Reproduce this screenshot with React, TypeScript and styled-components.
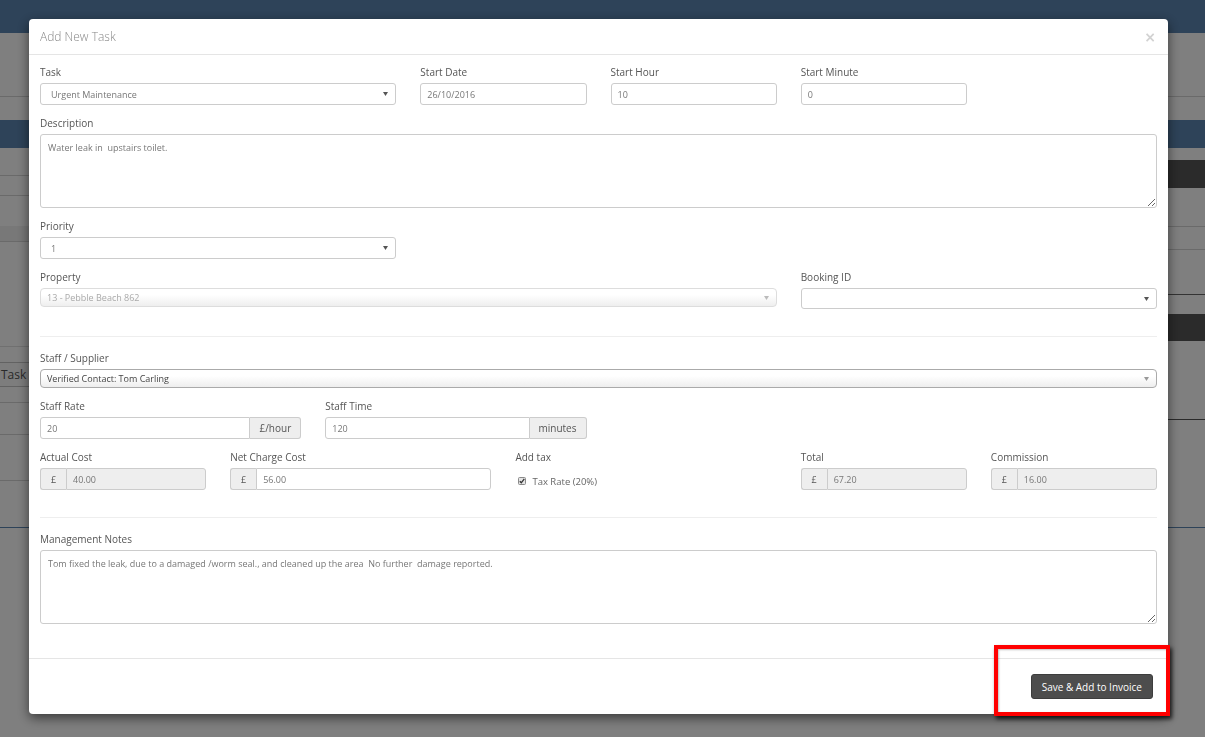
import React from 'react';
import styled, { createGlobalStyle } from 'styled-components';

const Global = createGlobalStyle`
  html, body { margin: 0; padding: 0; }
  body {
    width: 1205px;
    height: 737px;
    overflow: hidden;
    background: #fff;
    font-family: "Open Sans", "Liberation Sans", sans-serif;
  }
  * { box-sizing: border-box; }
`;

/* ---------- background page (under the backdrop) ---------- */
const Page = styled.div`
  width: 1205px;
  height: 737px;
  display: flex;
  flex-direction: column;
`;
const TopNav = styled.div`
  height: 33px;
  background: #5c86b2;
  flex-shrink: 0;
`;
const SubHeader = styled.div`
  height: 64px;
  border-bottom: 1px solid #d4d4d4;
`;
const BlueBar = styled.div`
  margin-top: 23px;
  height: 28px;
  background: #5c86b2;
`;
const Columns = styled.div`
  display: flex;
`;
const LeftCol = styled.div`
  width: 600px;
  display: flex;
  flex-direction: column;
`;
const RightCol = styled.div`
  flex: 1;
  display: flex;
  flex-direction: column;
`;
const Stripe = styled.div<{ $h: number; $bg?: string; $line?: string }>`
  height: ${(p) => p.$h}px;
  background: ${(p) => p.$bg || 'transparent'};
  border-bottom: ${(p) => (p.$line ? `1px solid ${p.$line}` : 'none')};
`;
const ButtonRow = styled.div`
  height: 56px;
  display: flex;
  align-items: center;
  border-bottom: 1px solid #d4d4d4;
`;
const GhostButton = styled.div`
  margin-left: -3px;
  height: 25px;
  padding: 0 8px 0 3px;
  border: 1px solid #c4c4c4;
  border-radius: 3px;
  font-size: 12px;
  color: #555;
  display: flex;
  align-items: center;
  background: #fafafa;
`;
const BlueLine = styled.div`
  height: 1px;
  background: #5c86b2;
`;

/* ---------- modal ---------- */
const Backdrop = styled.div`
  position: fixed;
  inset: 0;
  background: rgba(0, 0, 0, 0.5);
`;
const ModalLayer = styled.div`
  position: fixed;
  inset: 0;
  padding: 19px 0 0 29px;
`;
const Modal = styled.div`
  position: relative;
  width: 1139px;
  background: #fff;
  border-radius: 4px;
  box-shadow: 0 4px 12px rgba(0, 0, 0, 0.55);
`;
const Header = styled.div`
  height: 36px;
  padding: 0 11px;
  border-bottom: 1px solid #e5e5e5;
  display: flex;
  align-items: center;
  justify-content: space-between;
`;
const Title = styled.h4`
  margin: 0;
  font-size: 12px;
  font-weight: 300;
  color: #888;
`;
const Close = styled.span`
  font-size: 14px;
  line-height: 1;
  color: #d2d2d2;
  font-family: "DejaVu Sans", sans-serif;
  font-weight: bold;
  margin-right: 1px;
`;
const Body = styled.div`
  padding: 10px 11px 23px;
`;
const Row = styled.div`
  display: grid;
  grid-template-columns: repeat(12, 1fr);
  column-gap: 24px;
  margin-bottom: 11px;
  align-items: start;
`;
const Field = styled.div<{ $span: number }>`
  grid-column: span ${(p) => p.$span};
  min-width: 0;
`;
const Label = styled.label`
  display: block;
  font-size: 10px;
  line-height: 14px;
  margin-bottom: 4px;
  color: #555;
`;
const TextInput = styled.input<{ $ro?: boolean; $group?: 'left' | 'right' }>`
  display: block;
  width: 100%;
  min-width: 0;
  height: 22px;
  padding: 0 6px;
  border: 1px solid #ccc;
  border-radius: ${(p) =>
    p.$group === 'left' ? '3px 0 0 3px' : p.$group === 'right' ? '0 3px 3px 0' : '3px'};
  background: ${(p) => (p.$ro ? '#eee' : '#fff')};
  font-family: inherit;
  font-size: 9px;
  color: #777;
  outline: none;
  flex: 1;
`;
const TextArea = styled.textarea`
  display: block;
  width: 100%;
  height: 74px;
  padding: 6px 7px;
  border: 1px solid #ccc;
  border-radius: 3px;
  font-family: inherit;
  font-size: 9px;
  line-height: 14px;
  color: #777;
  resize: vertical;
  outline: none;
`;
const SelectBox = styled.div<{ $h?: number }>`
  height: ${(p) => p.$h || 22}px;
  border: 1px solid #ccc;
  border-radius: 3px;
  padding: 0 7px 0 10px;
  display: flex;
  align-items: center;
  justify-content: space-between;
  font-size: 9px;
  color: #777;
  background: #fff;
`;
const FancySelect = styled.div<{ $disabled?: boolean }>`
  height: 19px;
  border: 1px solid ${(p) => (p.$disabled ? '#ddd' : '#aaa')};
  border-radius: 4px;
  padding: 0 7px 0 6px;
  display: flex;
  align-items: center;
  justify-content: space-between;
  font-size: 9px;
  color: ${(p) => (p.$disabled ? '#aaa' : '#444')};
  background: linear-gradient(to bottom, #fff 0%, #fff 35%, #eee 100%);
`;
const InputGroup = styled.div`
  display: flex;
  height: 22px;
`;
const Addon = styled.span<{ $side: 'left' | 'right' }>`
  display: flex;
  align-items: center;
  justify-content: center;
  padding: 0 ${(p) => (p.$side === 'left' ? 8 : 9)}px;
  min-width: 26px;
  background: #eee;
  border: 1px solid #ccc;
  border-radius: ${(p) => (p.$side === 'left' ? '3px 0 0 3px' : '0 3px 3px 0')};
  ${(p) => (p.$side === 'left' ? 'border-right: 0;' : 'border-left: 0;')}
  font-size: ${(p) => (p.$side === 'left' ? 9 : 10)}px;
  color: #555;
  flex-shrink: 0;
`;
const CheckRow = styled.div`
  height: 22px;
  padding: 4px 0 0 3px;
  display: flex;
  align-items: center;
  gap: 6px;
  font-size: 9.5px;
  color: #666;
`;
const Divider = styled.hr`
  margin: 27px 0 14px;
  border: 0;
  border-top: 1px solid #eee;
`;
const Footer = styled.div`
  border-top: 1px solid #e5e5e5;
  padding: 15px;
  display: flex;
  justify-content: flex-end;
`;
const PrimaryButton = styled.button`
  height: 25px;
  padding: 0 10px;
  border: 1px solid #3d3d3d;
  border-radius: 3px;
  background: #4d4d4d;
  color: #fff;
  font-family: inherit;
  font-size: 10px;
`;
const Highlight = styled.div`
  position: absolute;
  left: 965px;
  top: 626px;
  width: 176px;
  height: 71px;
  border: 4px solid #ff0000;
  box-shadow: 2px 3px 4px rgba(0, 0, 0, 0.75), inset 1px 1px 2px rgba(0, 0, 0, 0.25);
  pointer-events: none;
`;

const Caret = ({ color = '#555' }: { color?: string }) => (
  <svg width="5" height="4" viewBox="0 0 5 4">
    <path d="M0 0 L5 0 L2.5 4 Z" fill={color} />
  </svg>
);

const CheckMark = () => (
  <svg width="8" height="8" viewBox="0 0 8 8">
    <rect x="0.5" y="0.5" width="7" height="7" rx="1" fill="#e4e4e4" stroke="#8a8a8a" />
    <path d="M1.8 4.2 L3.3 5.8 L6.3 1.8" fill="none" stroke="#333" strokeWidth="1.3" />
  </svg>
);

export default function App() {
  return (
    <>
      <Global />
      <Page>
        <TopNav />
        <SubHeader />
        <BlueBar />
        <Columns>
          <LeftCol>
            <Stripe $h={28} $line="#d4d4d4" />
            <Stripe $h={20} $line="#d4d4d4" />
            <Stripe $h={30} />
            <Stripe $h={16} $bg="#f0f0f0" $line="#d4d4d4" />
            <Stripe $h={105} $line="#e0e0e0" />
            <ButtonRow>
              <GhostButton>Task</GhostButton>
            </ButtonRow>
            <Stripe $h={32} $line="#d4d4d4" />
            <Stripe $h={46} $line="#d4d4d4" />
            <Stripe $h={46} />
          </LeftCol>
          <RightCol>
            <Stripe $h={12} />
            <Stripe $h={28} $bg="#565656" />
            <Stripe $h={39} $line="#d4d4d4" />
            <Stripe $h={23} $line="#d4d4d4" />
            <Stripe $h={45} $line="#666" />
            <Stripe $h={19} />
            <Stripe $h={27} $bg="#565656" />
            <Stripe $h={79} $line="#555" />
            <Stripe $h={107} />
          </RightCol>
        </Columns>
        <BlueLine />
      </Page>

      <Backdrop />
      <ModalLayer>
        <Modal>
          <Header>
            <Title>Add New Task</Title>
            <Close>×</Close>
          </Header>
          <Body>
            <Row>
              <Field $span={4}>
                <Label>Task</Label>
                <SelectBox>
                  Urgent Maintenance <Caret />
                </SelectBox>
              </Field>
              <Field $span={2}>
                <Label>Start Date</Label>
                <TextInput readOnly value="26/10/2016" />
              </Field>
              <Field $span={2}>
                <Label>Start Hour</Label>
                <TextInput readOnly value="10" />
              </Field>
              <Field $span={2}>
                <Label>Start Minute</Label>
                <TextInput readOnly value="0" />
              </Field>
            </Row>
            <Row>
              <Field $span={12}>
                <Label>Description</Label>
                <TextArea readOnly value="Water leak in  upstairs toilet." />
              </Field>
            </Row>
            <Row>
              <Field $span={4}>
                <Label>Priority</Label>
                <SelectBox>
                  1 <Caret />
                </SelectBox>
              </Field>
            </Row>
            <Row>
              <Field $span={8}>
                <Label>Property</Label>
                <FancySelect $disabled>
                  13 - Pebble Beach 862 <Caret color="#bbb" />
                </FancySelect>
              </Field>
              <Field $span={4}>
                <Label>Booking ID</Label>
                <SelectBox $h={21}>
                  <span />
                  <Caret />
                </SelectBox>
              </Field>
            </Row>
            <Divider />
            <Row>
              <Field $span={12}>
                <Label>Staff / Supplier</Label>
                <FancySelect>
                  Verified Contact: Tom Carling <Caret color="#999" />
                </FancySelect>
              </Field>
            </Row>
            <Row>
              <Field $span={3}>
                <Label>Staff Rate</Label>
                <InputGroup>
                  <TextInput readOnly value="20" $group="left" />
                  <Addon $side="right">£/hour</Addon>
                </InputGroup>
              </Field>
              <Field $span={3}>
                <Label>Staff Time</Label>
                <InputGroup>
                  <TextInput readOnly value="120" $group="left" />
                  <Addon $side="right">minutes</Addon>
                </InputGroup>
              </Field>
            </Row>
            <Row>
              <Field $span={2}>
                <Label>Actual Cost</Label>
                <InputGroup>
                  <Addon $side="left">£</Addon>
                  <TextInput readOnly value="40.00" $ro $group="right" />
                </InputGroup>
              </Field>
              <Field $span={3}>
                <Label>Net Charge Cost</Label>
                <InputGroup>
                  <Addon $side="left">£</Addon>
                  <TextInput readOnly value="56.00" $group="right" />
                </InputGroup>
              </Field>
              <Field $span={3}>
                <Label>Add tax</Label>
                <CheckRow>
                  <CheckMark />
                  Tax Rate (20%)
                </CheckRow>
              </Field>
              <Field $span={2}>
                <Label>Total</Label>
                <InputGroup>
                  <Addon $side="left">£</Addon>
                  <TextInput readOnly value="67.20" $ro $group="right" />
                </InputGroup>
              </Field>
              <Field $span={2}>
                <Label>Commission</Label>
                <InputGroup>
                  <Addon $side="left">£</Addon>
                  <TextInput readOnly value="16.00" $ro $group="right" />
                </InputGroup>
              </Field>
            </Row>
            <Divider />
            <Row>
              <Field $span={12}>
                <Label>Management Notes</Label>
                <TextArea
                  readOnly
                  value="Tom fixed the leak, due to a damaged /worm seal., and cleaned up the area  No further  damage reported."
                />
              </Field>
            </Row>
          </Body>
          <Footer>
            <PrimaryButton>Save &amp; Add to Invoice</PrimaryButton>
          </Footer>
          <Highlight />
        </Modal>
      </ModalLayer>
    </>
  );
}
